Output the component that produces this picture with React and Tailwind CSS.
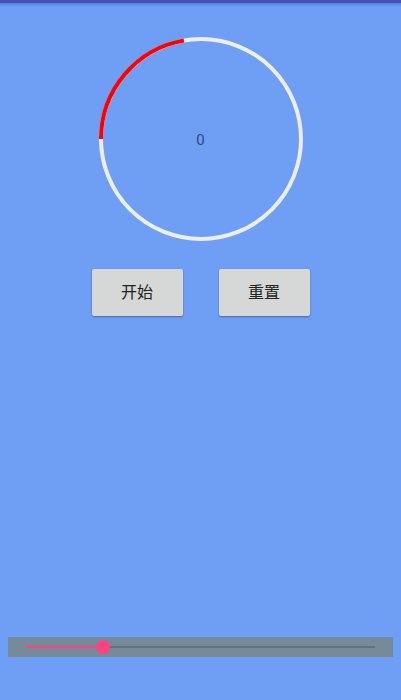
import { useState } from "react";

const R = 100;
const C = 2 * Math.PI * R;

export default function App() {
  const [count] = useState(0);
  // red arc: ~80deg, from 9 o'clock clockwise
  const arc = (80 / 360) * C;

  return (
    <div className="relative h-[700px] w-[401px] overflow-hidden bg-[#6f9ff5] font-['Roboto','Noto_Sans_CJK_SC',sans-serif]">
      {/* status strip */}
      <div className="h-[3px] bg-[#3f51b5]" />
      <div className="h-[4px] bg-gradient-to-b from-[#5a7ddb] to-[#6f9ff5]" />

      {/* ring */}
      <div className="mt-[30px] flex justify-center">
        <div className="relative h-[204px] w-[204px]">
          <svg width="204" height="204" viewBox="0 0 204 204">
            <circle cx="102" cy="102" r={R} fill="none" stroke="#eceef2" strokeWidth="4" />
            <circle
              cx="102"
              cy="102"
              r={R}
              fill="none"
              stroke="#ff0000"
              strokeWidth="4"
              strokeDasharray={`${arc} ${C}`}
              transform="rotate(180 102 102)"
            />
          </svg>
          <div className="absolute inset-0 flex items-center justify-center pt-[2px] text-[15px] text-[#2d4a7e]">
            {count}
          </div>
        </div>
      </div>

      {/* buttons */}
      <div className="mt-[28px] flex justify-center gap-[36px]">
        <button className="h-[47px] w-[91px] rounded-[2px] bg-[#d6d7d7] pt-[1px] text-[16px] text-[#222] shadow-[0_1px_2px_rgba(0,0,0,0.35)]">
          开始
        </button>
        <button className="h-[47px] w-[91px] rounded-[2px] bg-[#d6d7d7] pt-[1px] text-[16px] text-[#222] shadow-[0_1px_2px_rgba(0,0,0,0.35)]">
          重置
        </button>
      </div>

      {/* slider */}
      <div className="absolute left-[8px] top-[637px] flex h-[20px] w-[385px] items-center bg-[#778a99] px-[18px]">
        <div className="relative h-[2px] w-full bg-[#5f7384]">
          <div className="h-[2px] w-[77px] bg-[#ff4081]" />
          <div className="absolute left-[70px] top-[-6px] h-[14px] w-[14px] rounded-full bg-[#ff4081]" />
        </div>
      </div>
    </div>
  );
}
